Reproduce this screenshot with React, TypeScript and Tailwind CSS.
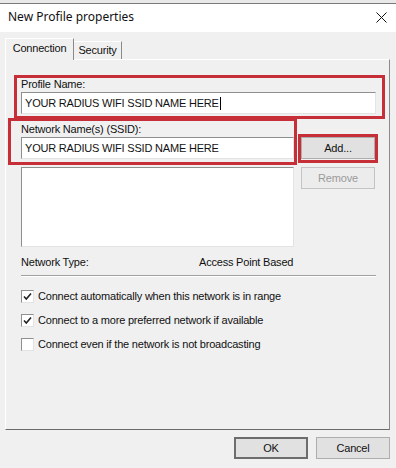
import React from 'react'

const font = { fontFamily: '"Liberation Sans", Arial, sans-serif' }

function Check({ checked, label }: { checked: boolean; label: string }) {
  return (
    <div className="flex items-center h-[13px] mt-[11px] first:mt-0">
      <div className="w-[13px] h-[13px] border border-t-[#8e8f8f] border-l-[#8e8f8f] border-r-[#e3e3e3] border-b-[#e3e3e3] bg-white flex items-center justify-center">
        {checked && (
          <svg width="9" height="9" viewBox="0 0 9 9">
            <path d="M1 4.5 L3.3 7 L8 1.5" fill="none" stroke="#222" strokeWidth="1.6" />
          </svg>
        )}
      </div>
      <span className="ml-[4px] text-[11px] text-[#111] leading-[13px]">{label}</span>
    </div>
  )
}

function WinButton({ children, disabled, isDefault, className }: { children: React.ReactNode; disabled?: boolean; isDefault?: boolean; className?: string }) {
  return (
    <button
      className={
        'h-[22px] text-[11px] flex items-center justify-center bg-[#e1e1e1] ' +
        (isDefault ? 'border-2 border-[#6d6d6d] ' : 'border border-[#adadad] ') +
        (disabled ? 'text-[#9a9a9a] bg-[#ececec] border-[#c4c4c4] ' : 'text-[#111] ') +
        (className || '')
      }
    >
      {children}
    </button>
  )
}

export default function App() {
  return (
    <div className="w-[396px] h-[468px] bg-[#f0f0f0] relative overflow-hidden tracking-[-0.2px]" style={font}>
      {/* strip of window behind */}
      <div className="h-[4px] bg-[#e9e9e9] border-b border-[#7a7a7a]" />

      {/* title bar */}
      <div className="h-[28px] bg-white flex items-center justify-between pl-[8px] pr-[9px] pb-[2px]">
        <span className="text-[12px] text-[#111] tracking-normal" style={{ fontFamily: '"Noto Sans", "Liberation Sans", sans-serif' }}>
          New Profile properties
        </span>
        <svg width="11" height="11" viewBox="0 0 11 11">
          <path d="M0.5 0.5 L10.5 10.5 M10.5 0.5 L0.5 10.5" stroke="#111" strokeWidth="1" />
        </svg>
      </div>

      {/* tabs */}
      <div className="flex items-end pl-[5px] pt-[6px]">
        <div className="h-[22px] w-[69px] bg-[#f0f0f0] border-t border-l border-white border-r border-r-[#8a8a8a] flex items-center justify-center text-[11px] text-[#111] pb-[2px] relative z-10 -mb-[1px]">
          Connection
        </div>
        <div className="h-[18px] w-[48px] border-t border-white border-r border-r-[#8a8a8a] flex items-center justify-center text-[11px] text-[#111]">
          Security
        </div>
      </div>

      {/* tab panel */}
      <div className="ml-[5px] w-[385px] h-[371px] border border-t-white border-l-white border-r-[#8a8a8a] border-b-[#6a6a6a] pl-[15px] pt-[17px] text-[11px] text-[#111]">
        <div className="h-[14px] leading-[14px]">Profile Name:</div>
        <div className="mt-[1px] w-[355px] h-[22px] bg-white border border-t-[#8e8f8f] border-l-[#8e8f8f] border-r-[#e3e3e3] border-b-[#e3e3e3] flex items-center pl-[3px]">
          YOUR RADIUS WIFI SSID NAME HERE
          <span className="ml-[1px] w-[1px] h-[13px] bg-black" />
        </div>

        <div className="mt-[8px] h-[14px] leading-[14px]">Network Name(s) (SSID):</div>
        <div className="mt-[1px] flex">
          <div className="w-[273px]">
            <div className="h-[22px] bg-white border border-t-[#8e8f8f] border-l-[#8e8f8f] border-r-[#e3e3e3] border-b-[#e3e3e3] flex items-center pl-[3px]">
              YOUR RADIUS WIFI SSID NAME HERE
            </div>
            <div className="mt-[8px] h-[80px] bg-white border border-t-[#8e8f8f] border-l-[#8e8f8f] border-r-[#e3e3e3] border-b-[#e3e3e3]" />
          </div>
          <div className="ml-[7px] w-[74px]">
            <WinButton className="w-[74px]">Add...</WinButton>
            <WinButton className="w-[74px] mt-[8px]" disabled>
              Remove
            </WinButton>
          </div>
        </div>

        <div className="mt-[8px] h-[14px] leading-[14px] flex">
          <span className="w-[178px]">Network Type:</span>
          <span>Access Point Based</span>
        </div>
        <div className="mt-[6px] w-[355px] h-[2px] border-t border-[#a0a0a0] border-b border-b-white" />

        <div className="mt-[13px]">
          <Check checked label="Connect automatically when this network is in range" />
          <Check checked label="Connect to a more preferred network if available" />
          <Check checked={false} label="Connect even if the network is not broadcasting" />
        </div>
      </div>

      {/* dialog buttons */}
      <div className="flex justify-end pr-[6px] mt-[7px] gap-[8px] text-[11px]">
        <WinButton isDefault className="w-[74px]">OK</WinButton>
        <WinButton className="w-[74px]">Cancel</WinButton>
      </div>

      {/* red annotation boxes */}
      <div className="absolute left-[14px] top-[75px] w-[371px] h-[44px] border-[3px] border-[#c62e38] pointer-events-none" />
      <div className="absolute left-[8px] top-[118px] w-[289px] h-[47px] border-[3px] border-[#c62e38] pointer-events-none" />
      <div className="absolute left-[298px] top-[134px] w-[80px] h-[29px] border-[3px] border-[#c62e38] pointer-events-none" />
    </div>
  )
}
